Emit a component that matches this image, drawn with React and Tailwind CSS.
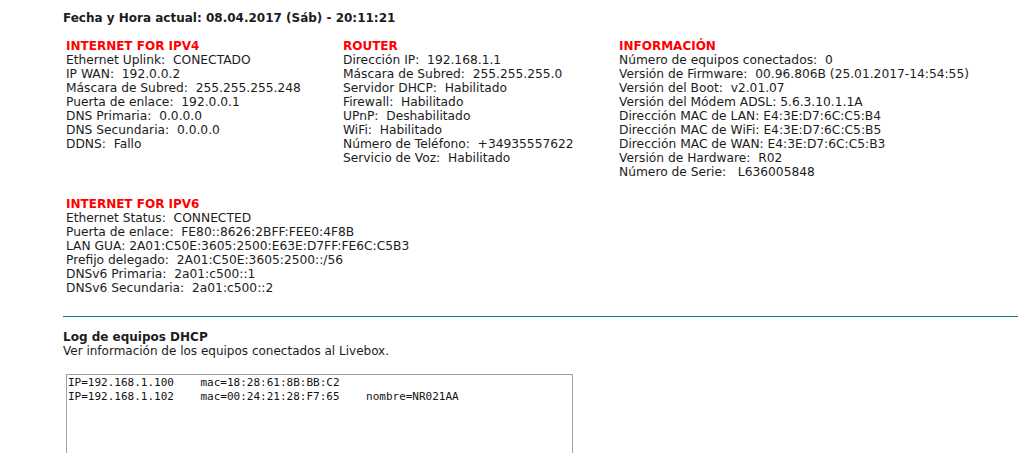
import React from "react";

const ipv4 = [
  "Ethernet Uplink:  CONECTADO",
  "IP WAN:  192.0.0.2",
  "Máscara de Subred:  255.255.255.248",
  "Puerta de enlace:  192.0.0.1",
  "DNS Primaria:  0.0.0.0",
  "DNS Secundaria:  0.0.0.0",
  "DDNS:  Fallo",
];

const router = [
  "Dirección IP:  192.168.1.1",
  "Máscara de Subred:  255.255.255.0",
  "Servidor DHCP:  Habilitado",
  "Firewall:  Habilitado",
  "UPnP:  Deshabilitado",
  "WiFi:  Habilitado",
  "Número de Teléfono:  +34935557622",
  "Servicio de Voz:  Habilitado",
];

const info = [
  "Número de equipos conectados:  0",
  "Versión de Firmware:  00.96.806B (25.01.2017-14:54:55)",
  "Versión del Boot:  v2.01.07",
  "Versión del Módem ADSL: 5.6.3.10.1.1A",
  "Dirección MAC de LAN: E4:3E:D7:6C:C5:B4",
  "Dirección MAC de WiFi: E4:3E:D7:6C:C5:B5",
  "Dirección MAC de WAN: E4:3E:D7:6C:C5:B3",
  "Versión de Hardware:  R02",
  "Número de Serie:   L636005848",
];

const ipv6 = [
  "Ethernet Status:  CONNECTED",
  "Puerta de enlace:  FE80::8626:2BFF:FEE0:4F8B",
  "LAN GUA: 2A01:C50E:3605:2500:E63E:D7FF:FE6C:C5B3",
  "Prefijo delegado:  2A01:C50E:3605:2500::/56",
  "DNSv6 Primaria:  2a01:c500::1",
  "DNSv6 Secundaria:  2a01:c500::2",
];

const logDhcp =
  "IP=192.168.1.100    mac=18:28:61:8B:BB:C2\nIP=192.168.1.102    mac=00:24:21:28:F7:65    nombre=NR021AA";

const Bloque = ({ titulo, filas }) => (
  <div className="pl-[3px]">
    <div className="text-[12px] font-bold text-[#ff0000]">{titulo}</div>
    {filas.map((fila, i) => (
      <div key={i} className="whitespace-pre">
        {fila}
      </div>
    ))}
  </div>
);

export default function App() {
  return (
    <div className="min-h-screen bg-white pl-[63px] pt-[11px] text-[12.25px] leading-[14px] text-[#1c1c1c] [font-family:'DejaVu_Sans',sans-serif]">
      <div className="text-[12px] font-bold">Fecha y Hora actual: 08.04.2017 (Sáb) - 20:11:21</div>

      <div className="mt-[14px] grid grid-cols-[277px_276px_1fr]">
        <Bloque titulo="INTERNET FOR IPV4" filas={ipv4} />
        <Bloque titulo="ROUTER" filas={router} />
        <Bloque titulo="INFORMACIÓN" filas={info} />
      </div>

      <div className="mt-[18px]">
        <Bloque titulo="INTERNET FOR IPV6" filas={ipv6} />
      </div>

      <hr className="mt-[21px] border-0 border-t border-[#008080]" />

      <div className="mt-[13px] text-[12px] font-bold">Log de equipos DHCP</div>
      <div className="text-[12px]">Ver información de los equipos conectados al Livebox.</div>

      <textarea
        readOnly
        value={logDhcp}
        className="mt-[16px] ml-[3px] block h-[110px] w-[507px] resize-none border border-[#a0a0a0] px-[1px] pt-[1px] text-[11px] leading-[14px] text-[#111] outline-none [font-family:'DejaVu_Sans_Mono',monospace]"
      />
    </div>
  );
}
